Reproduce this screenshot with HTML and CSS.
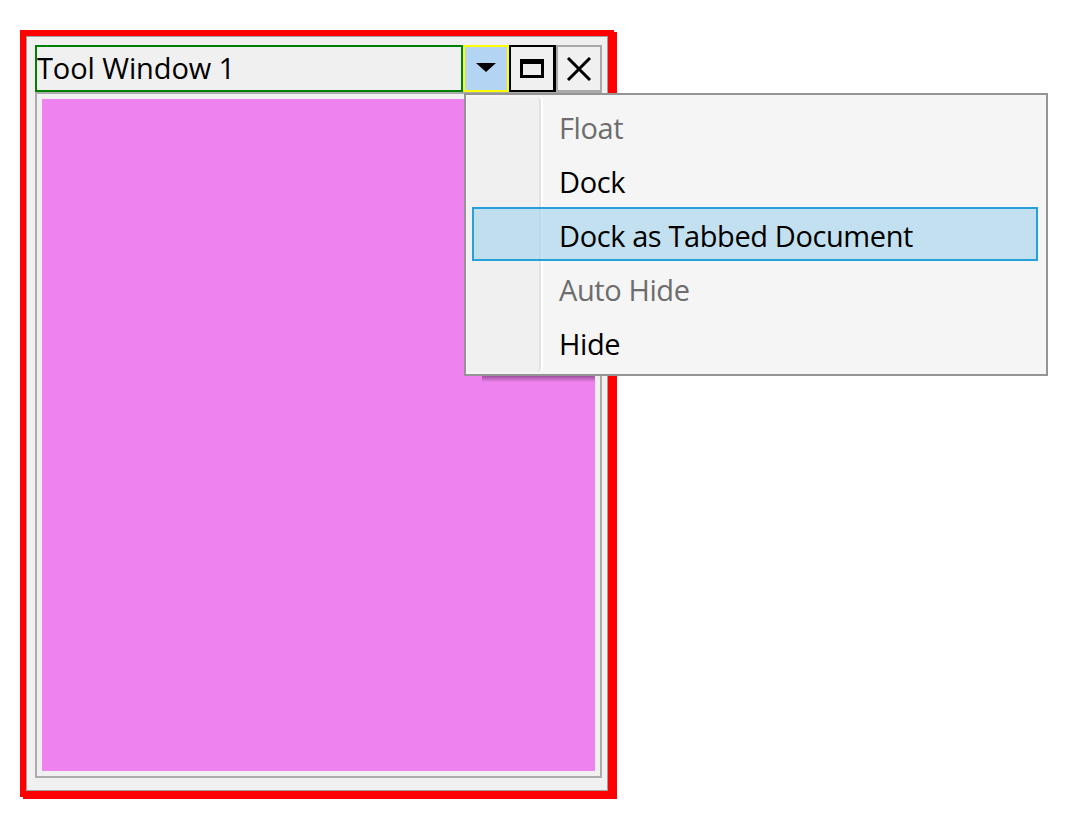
FILE: index.html
```
<!DOCTYPE html>
<html>
<head>
<meta charset="utf-8">
<link rel="stylesheet" href="styles.css">
</head>
<body>
<div class="stage">
  <div class="window">
    <div class="frame">
      <div class="header">
        <div class="title">Tool Window 1</div>
        <div class="btn btn-menu">
          <svg width="22" height="10" viewBox="0 0 22 10"><polygon points="1,1 21,1 11,10" fill="#000"/></svg>
        </div>
        <div class="btn btn-max">
          <svg width="26" height="22" viewBox="0 0 26 22"><rect x="2.5" y="3.5" width="21" height="16" fill="none" stroke="#000" stroke-width="3"/><rect x="1" y="2" width="24" height="5" fill="#000"/></svg>
        </div>
        <div class="btn btn-close">
          <svg width="26" height="24" viewBox="0 0 26 24"><path d="M2 1 L24 23 M24 1 L2 23" stroke="#000" stroke-width="3" fill="none"/></svg>
        </div>
      </div>
      <div class="content">
        <div class="pink"><div class="menu-shadow"></div></div>
      </div>
    </div>
  </div>

  <div class="menu">
    <div class="icon-col"></div>
    <div class="item disabled">Float</div>
    <div class="item">Dock</div>
    <div class="item active">Dock as Tabbed Document</div>
    <div class="item disabled">Auto Hide</div>
    <div class="item">Hide</div>
  </div>
</div>
</body>
</html>
```
FILE: styles.css
```
html, body {
  margin: 0;
  padding: 0;
  background: #ffffff;
}
body {
  font-family: "Open Sans", "Noto Sans", "Liberation Sans", sans-serif;
}
.stage {
  position: relative;
  width: 1081px;
  height: 836px;
  padding: 30px 0 0 20px;
  box-sizing: border-box;
}
.window {
  width: 594px;
  height: 767px;
  box-sizing: border-box;
  border: 6px solid #ff0000;
  box-shadow: 3px 2px 0 #ff0000;
}
.frame {
  height: 100%;
  box-sizing: border-box;
  border: 1px solid #a0a0a0;
  background: #f0f0f0;
  padding: 8px 5px 12px 8px;
  display: flex;
  flex-direction: column;
}
.header {
  display: flex;
  height: 47px;
  flex: none;
}
.title {
  width: 428px;
  box-sizing: border-box;
  border: 2px solid #008000;
  font-size: 29px;
  letter-spacing: -0.1px;
  line-height: 42px;
  padding-left: 0;
  color: #000;
  white-space: nowrap;
}
.btn {
  box-sizing: border-box;
  border: 2px solid;
  display: flex;
  align-items: center;
  justify-content: center;
}
.btn-menu {
  width: 46px;
  border-color: #ffff00;
  background: #b3d4f3;
}
.btn-menu svg { margin-top: -4px; }
.btn-max {
  width: 47px;
  border-color: #000;
  border-width: 2px 3px 2px 2px;
  background: #f0f0f0;
}
.btn-max svg { margin-top: -2px; }
.btn-close {
  width: 46px;
  border-color: #a9a9a9;
  background: #f0f0f0;
}
.content {
  flex: 1;
  border: 2px solid #ababab;
  padding: 5px;
  display: flex;
}
.pink {
  flex: 1;
  background: #ee82ee;
  position: relative;
}
.menu-shadow {
  position: absolute;
  left: 440px;
  right: 0;
  top: 277px;
  height: 6px;
  background: linear-gradient(to bottom, rgba(90,40,90,0.55), rgba(90,40,90,0));
}
.menu {
  position: absolute;
  left: 464px;
  top: 93px;
  width: 584px;
  height: 283px;
  box-sizing: border-box;
  border: 2px solid #949494;
  background: #f5f5f5;
  padding: 4px 8px 5px 6px;
}
.icon-col {
  position: absolute;
  left: 1px;
  top: 2px;
  bottom: 2px;
  width: 72px;
  background: #f0f0f0;
  border-radius: 4px;
  border-right: 2px solid #e2e2e2;
  box-shadow: 2px 0 0 #ffffff;
}
.item {
  position: relative;
  height: 54px;
  box-sizing: border-box;
  border: 2px solid transparent;
  padding-left: 85px;
  padding-top: 2px;
  font-size: 29px;
  letter-spacing: -0.4px;
  display: flex;
  align-items: center;
  color: #000;
  white-space: nowrap;
}
.item.disabled {
  color: #6d6d6d;
}
.item.active {
  background: rgba(160, 210, 235, 0.6);
  border-color: #26a0da;
}
```
